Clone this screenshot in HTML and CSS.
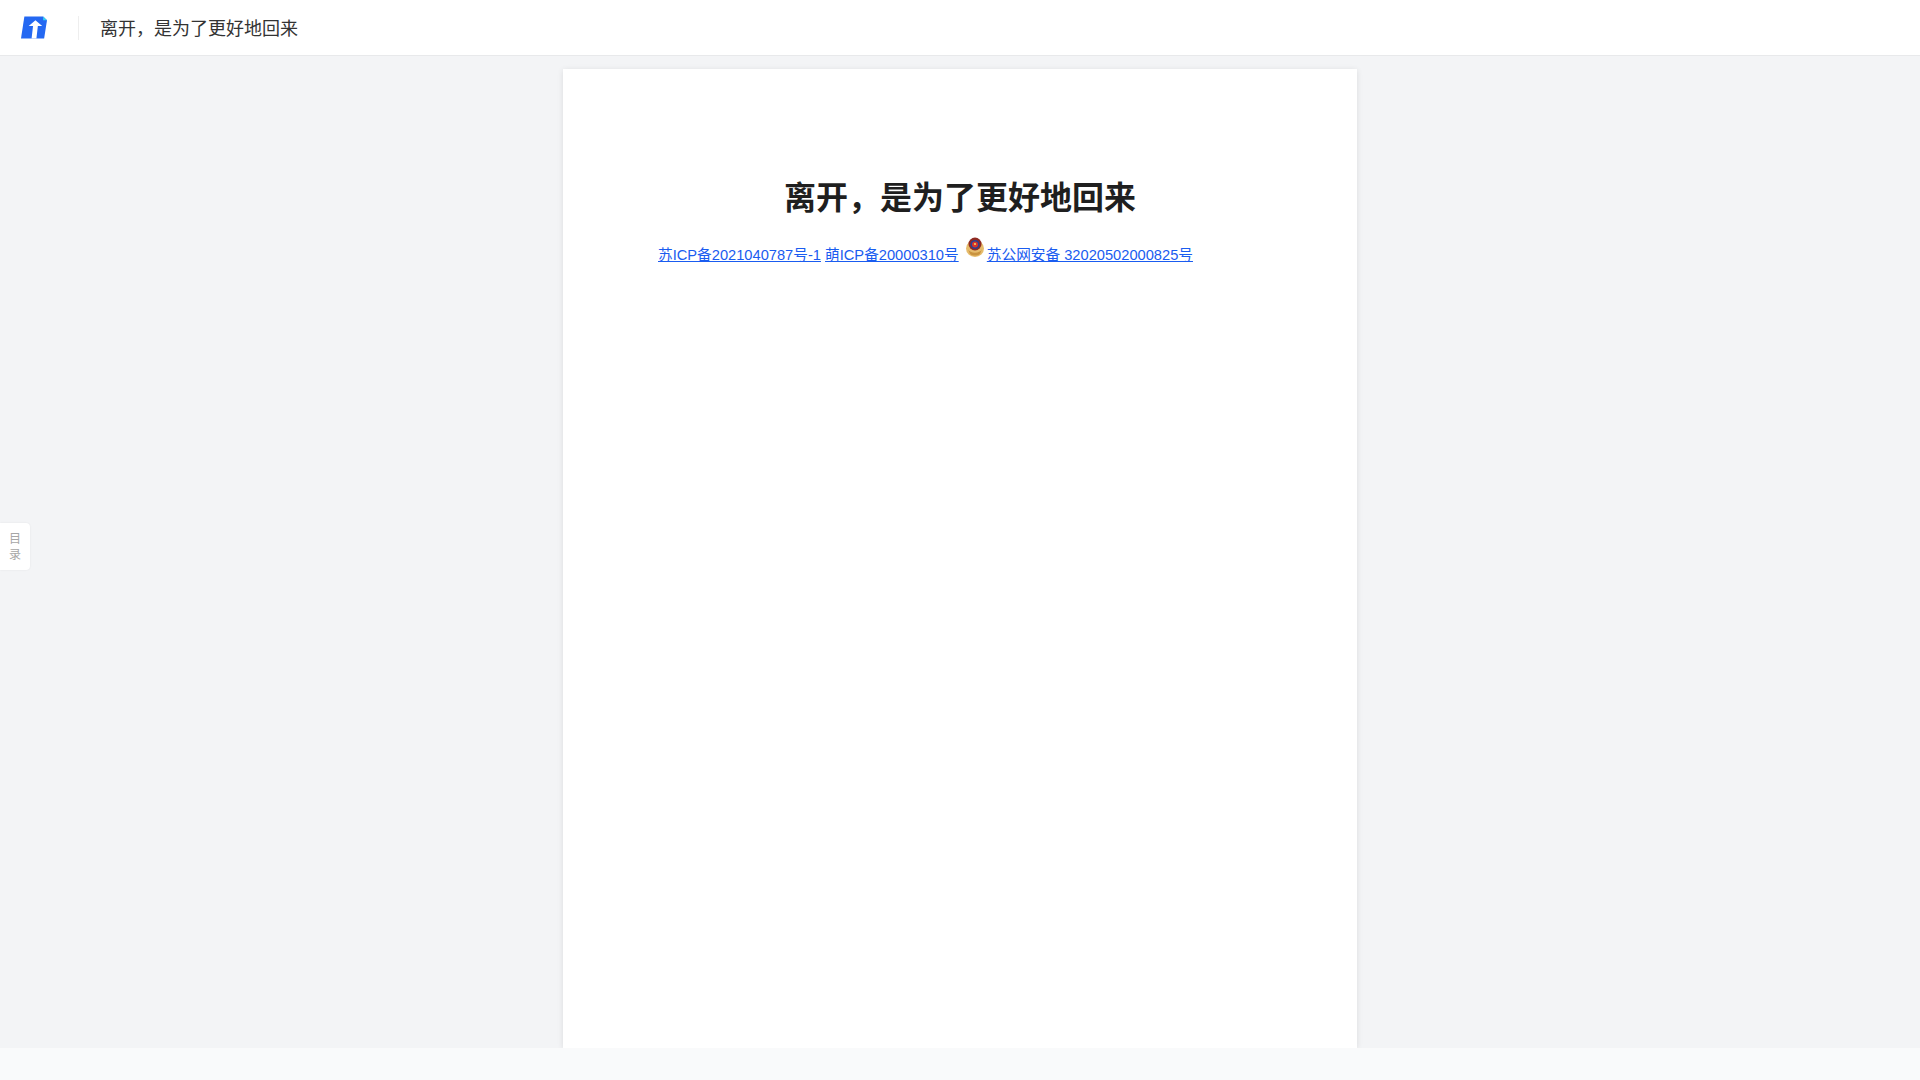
FILE: index.html
```html
<!DOCTYPE html>
<html lang="zh-CN">
<head>
  <meta charset="UTF-8" />
  <title>离开，是为了更好地回来</title>
  <link rel="stylesheet" href="styles.css">
</head>
<body>
  <div class="header">
    <svg class="logo" viewBox="0 0 27 23" xmlns="http://www.w3.org/2000/svg">
      <path d="M3.5 0H23L27 4L24 23H0Z" fill="#2468f2"/>
      <path d="M15 4L8 10H12.5L11 23H16L17.5 10H22Z" fill="#fff"/>
      <path d="M23 0L27 4H23Z" fill="#3ad0f0"/>
    </svg>
    <div class="divider"></div>
    <div class="doc-name">离开，是为了更好地回来</div>
  </div>

  <div class="main">
    <div class="toc-tab"><span>目</span><span>录</span></div>
    <div class="page">
      <h1>离开，是为了更好地回来</h1>
      <p class="record">
        <a href="#">苏ICP备2021040787号-1</a>
        <a href="#">萌ICP备20000310号</a>
        <svg class="emblem" viewBox="0 0 18 20" xmlns="http://www.w3.org/2000/svg">
          <ellipse cx="9" cy="11.5" rx="9" ry="8.5" fill="#e6bc6c"/>
          <path d="M2 12C4 17 14 17 16 12L14 17C11 19 7 19 4 17Z" fill="#c9933f"/>
          <circle cx="9" cy="7" r="6.5" fill="#8f2a22"/>
          <circle cx="9" cy="7.5" r="4.6" fill="#2a3f90"/>
          <circle cx="9" cy="7.5" r="3" fill="#d8342a"/>
          <circle cx="9" cy="7" r="1.1" fill="#f4d060"/>
        </svg>
        <a href="#">苏公网安备 32020502000825号</a>
      </p>
    </div>
  </div>

  <div class="footer"></div>
</body>
</html>
```
FILE: styles.css
```css
html, body {
  height: 100%;
}

body {
  margin: 0;
  height: 100vh;
  overflow: hidden;
  display: flex;
  flex-direction: column;
  background-color: #f9fafb;
  font-family: "Liberation Sans", "Noto Sans CJK SC", sans-serif;
  color: #1f1f1f;
}

.header {
  height: 55px;
  flex-shrink: 0;
  display: flex;
  align-items: center;
  background-color: #fff;
  border-bottom: 1px solid #e8e9eb;
  padding-left: 21px;
}

.logo {
  width: 26px;
  height: 23px;
  margin-bottom: 1px;
}

.divider {
  width: 1px;
  height: 24px;
  margin-left: 31px;
  background-color: #eeeeee;
}

.doc-name {
  margin-left: 21px;
  margin-bottom: 1px;
  font-size: 18px;
  color: #333;
}

.main {
  flex: 1;
  min-height: 0;
  position: relative;
  display: flex;
  justify-content: center;
  padding-top: 13px;
  overflow: hidden;
  background-color: #f3f4f6;
}

.page {
  width: 794px;
  background-color: #fff;
  box-shadow: 0 1px 6px rgba(0, 0, 0, 0.1);
  text-align: center;
}

.page h1 {
  margin: 108px 0 0;
  font-size: 32px;
  line-height: 42px;
  font-weight: 700;
  color: #1f1f1f;
}

.record {
  margin: 18px 0 0;
  font-size: 14.67px;
  line-height: 28px;
  padding-right: 69px;
}

.record a {
  color: #1a5cf0;
}

.emblem {
  width: 18px;
  height: 20px;
  vertical-align: 3px;
  margin: 0 -1px 0 3px;
}

.toc-tab {
  position: absolute;
  left: 0;
  top: 467px;
  width: 30px;
  height: 47px;
  display: flex;
  flex-direction: column;
  align-items: center;
  justify-content: center;
  background-color: #fff;
  border-radius: 0 4px 4px 0;
  box-shadow: 0 0 2px rgba(0, 0, 0, 0.08);
  font-size: 12px;
  line-height: 16px;
  color: #a6a6a6;
}

.footer {
  height: 32px;
  flex-shrink: 0;
  background-color: #f9fafb;
}
```
